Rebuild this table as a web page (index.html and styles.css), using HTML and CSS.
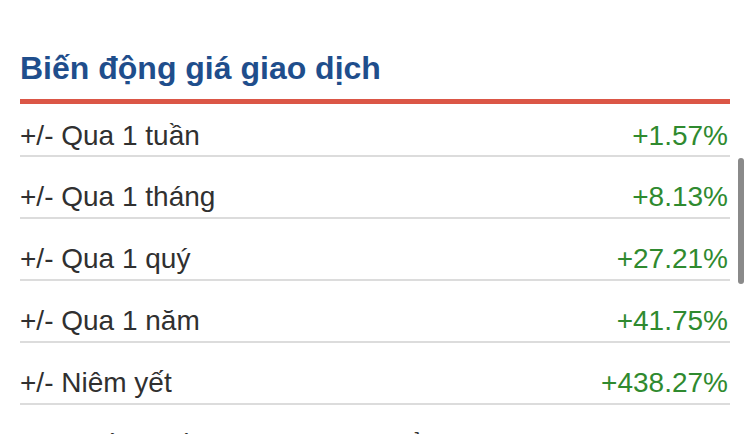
FILE: index.html
```html
<!DOCTYPE html>
<html lang="vi">
<head>
<meta charset="utf-8">
<link rel="stylesheet" href="styles.css">
</head>
<body>
<section class="panel">
  <h2 class="title">Biến động giá giao dịch</h2>
  <ul class="rows">
    <li class="row"><span class="label">+/- Qua 1 tuần</span><span class="value">+1.57%</span></li>
    <li class="row"><span class="label">+/- Qua 1 tháng</span><span class="value">+8.13%</span></li>
    <li class="row"><span class="label">+/- Qua 1 quý</span><span class="value">+27.21%</span></li>
    <li class="row"><span class="label">+/- Qua 1 năm</span><span class="value">+41.75%</span></li>
    <li class="row"><span class="label">+/- Niêm yết</span><span class="value">+438.27%</span></li>
    <li class="row row-next"><span class="label">Cao nhất 52 tuần (giá trị đã khớp kể từ năm)</span><span class="value"></span></li>
  </ul>
</section>
<div class="scrollbar"></div>
</body>
</html>
```
FILE: styles.css
```css
html, body {
  margin: 0;
  padding: 0;
  background: #ffffff;
  overflow: hidden;
  height: 434px;
}
body {
  font-family: "Liberation Sans", Arial, sans-serif;
}
.panel {
  padding: 50px 20px 0 20px;
}
.title {
  margin: 0;
  font-size: 32px;
  line-height: 36px;
  font-weight: bold;
  color: #1f4e8c;
  padding-bottom: 13px;
  border-bottom: 5px solid #db5646;
}
.rows {
  list-style: none;
  margin: 0;
  padding: 0;
}
.row {
  display: flex;
  justify-content: space-between;
  box-sizing: content-box;
  padding: 24px 2px 0 0;
  height: 36px;
  border-bottom: 2px solid #dcdcdc;
  font-size: 28px;
  line-height: 32px;
  white-space: nowrap;
}
.row:first-child {
  padding-top: 16px;
  height: 35px;
}
.row-next {
  font-size: 25px;
  padding-top: 23px;
}
.label {
  color: #303030;
}
.value {
  color: #2f8a2f;
}
.scrollbar {
  position: absolute;
  left: 738px;
  top: 158px;
  width: 6px;
  height: 126px;
  border-radius: 3px;
  background: #8a8a8a;
}
```
